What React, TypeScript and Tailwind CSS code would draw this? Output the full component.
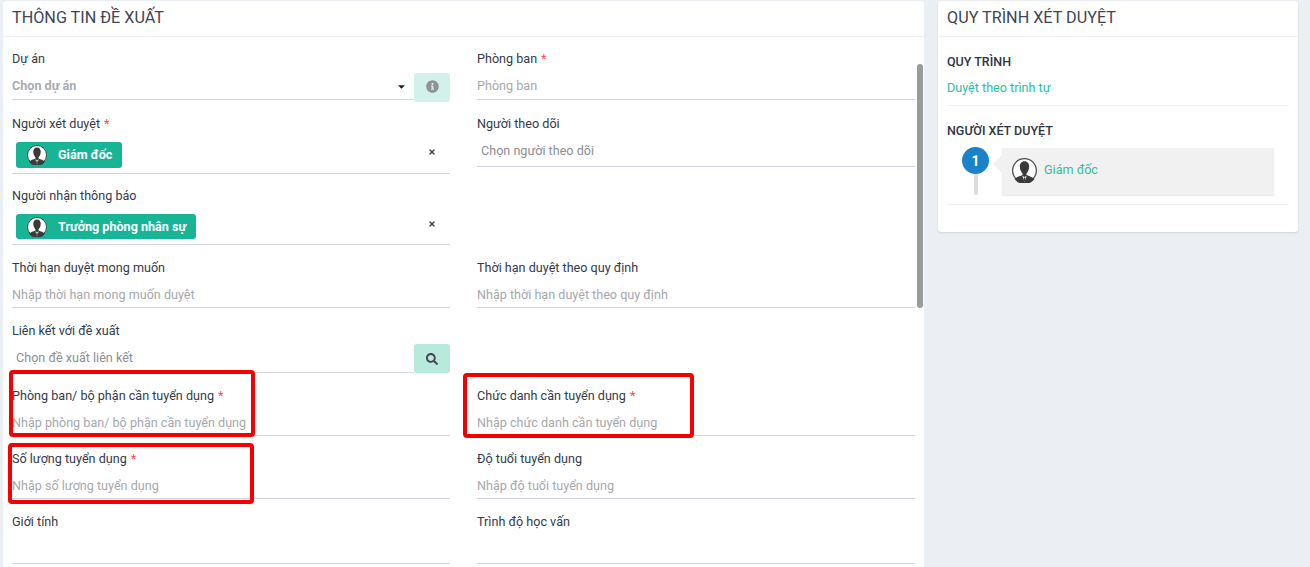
import type { ReactNode } from 'react';
import { FaCaretDown, FaInfoCircle, FaSearch, FaTimes } from 'react-icons/fa';

function Avatar({ className }: { className: string }) {
  return (
    <svg viewBox="0 0 40 40" className={className}>
      <circle cx="20" cy="20" r="19" fill="#fff" stroke="#4a4a4a" strokeWidth="2" />
      <path d="M20 5c-5 0-7.500 4-7.500 8.500 0 4.500 2.200 8.500 4.500 11.500v2c-4.500 2-10 3-13 6.500a19.500 19.500 0 0 0 32 0c-3-3.500-8.500-4.500-13-6.500v-2c2.300-3 4.500-7 4.500-11.500 0-4.500-2.500-8.500-7.500-8.500z" fill="#3a3a3a" />
      <path d="M16.500 28.500l3.500 10 3.500-10-3.500 2z" fill="#fff" />
      <path d="M19 31h2l.6 6h-3.200z" fill="#3a3a3a" />
    </svg>
  );
}

function Label({ text, required }: { text: string; required?: boolean }) {
  return (
    <div className="h-5 leading-5 text-[#333a4a]">
      {text}
      {required && <span className="ml-1 text-[#f4514b]">*</span>}
    </div>
  );
}

function Chip({ text, className }: { text: string; className: string }) {
  return (
    <div className={`flex items-center rounded-[3px] bg-[#17b595] pl-[11px] font-bold text-white ${className}`}>
      <Avatar className="h-5 w-5 shrink-0" />
      <span className="ml-[11px]">{text}</span>
    </div>
  );
}

function ChipField({ text, chipClass, height }: { text: string; chipClass: string; height: string }) {
  return (
    <div className={`flex items-start justify-between border-b border-[#d2d6e0] pl-1 pr-[14px] ${height}`}>
      <Chip text={text} className={chipClass} />
      <FaTimes className="mt-[14px] text-[8px] text-[#444]" />
    </div>
  );
}

function TextField({ text, height = 'h-[30px]', top = 'pt-[5px]' }: { text: string; height?: string; top?: string }) {
  return (
    <div className={`flex items-center border-b border-[#d2d6e0] text-[#a6a8ad] ${top} ${height}`}>
      {text}
    </div>
  );
}

function Field({ label, required, children }: { label: string; required?: boolean; children: ReactNode }) {
  return (
    <div>
      <Label text={label} required={required} />
      {children}
    </div>
  );
}

function Frame({ className }: { className: string }) {
  return <div className={`pointer-events-none absolute rounded-[4px] border-4 border-[#f40000] ${className}`} />;
}

export default function App() {
  return (
    <div className="flex h-screen items-start overflow-hidden bg-[#ebeef3] pl-[3px] pt-px font-['Roboto',sans-serif] text-[12.6px]">
      <div className="relative h-[600px] w-[921px] shrink-0 rounded-t-[3px] bg-white">
        <div className="h-9 border-b border-[#f0f1f4] pl-[9px] text-[16.2px] leading-[33px] text-[#3f4553]">
          THÔNG TIN ĐỀ XUẤT
        </div>

        <div className="grid grid-cols-2 gap-x-[27px] gap-y-[13px] pl-[9px] pr-[9px] pt-[12px]">
          <div className="mb-px">
            <Field label="Dự án">
              <div className="flex h-[31px] items-start">
                <div className="flex h-[31px] flex-1 items-center justify-between border-b border-[#d2d6e0] pr-[7px] pt-[4px] font-bold text-[#a9abb0]">
                  <span>Chọn dự án</span>
                  <FaCaretDown className="text-[11px] text-[#222]" />
                </div>
                <div className="mt-1 flex h-[29px] w-9 items-center justify-center rounded-[3px] bg-[#d2f1ea] pb-[3px]">
                  <FaInfoCircle className="text-[13px] text-[#8f9396]" />
                </div>
              </div>
            </Field>
          </div>
          <Field label="Phòng ban" required>
            <TextField text="Phòng ban" height="h-[31px]" top="pt-[4px]" />
          </Field>

          <Field label="Người xét duyệt" required>
            <ChipField text="Giám đốc" chipClass="mt-[8px] h-[26px] w-[106px]" height="h-[40px]" />
          </Field>
          <Field label="Người theo dõi">
            <div className="flex h-[33px] items-center border-b border-[#d2d6e0] pl-1 pt-[3px] text-[#8c8e94]">
              Chọn người theo dõi
            </div>
          </Field>

          <div className="-mt-px">
            <Field label="Người nhận thông báo">
              <ChipField text="Trưởng phòng nhân sự" chipClass="mt-2 h-[25px] w-[180px] pt-px" height="h-[39px]" />
            </Field>
          </div>
          <div />

          <Field label="Thời hạn duyệt mong muốn">
            <TextField text="Nhập thời hạn mong muốn duyệt" />
          </Field>
          <Field label="Thời hạn duyệt theo quy định">
            <TextField text="Nhập thời hạn duyệt theo quy định" />
          </Field>

          <Field label="Liên kết với đề xuất">
            <div className="flex h-8 items-start">
              <div className="flex h-8 flex-1 items-center border-b border-[#d2d6e0] pl-1 pt-[3px] text-[#8c8e94]">
                Chọn đề xuất liên kết
              </div>
              <div className="mt-[3px] flex h-[29px] w-9 items-center justify-center rounded-[3px] bg-[#b7eadd]">
                <FaSearch className="text-[12px] text-[#3c4650]" />
              </div>
            </div>
          </Field>
          <div />

          <Field label="Phòng ban/ bộ phận cần tuyển dụng" required>
            <TextField text="Nhập phòng ban/ bộ phận cần tuyển dụng" />
          </Field>
          <Field label="Chức danh cần tuyển dụng" required>
            <TextField text="Nhập chức danh cần tuyển dụng" />
          </Field>

          <Field label="Số lượng tuyển dụng" required>
            <TextField text="Nhập số lượng tuyển dụng" />
          </Field>
          <Field label="Độ tuổi tuyển dụng">
            <TextField text="Nhập độ tuổi tuyển dụng" />
          </Field>

          <Field label="Giới tính">
            <TextField text="" height="h-8" />
          </Field>
          <Field label="Trình độ học vấn">
            <TextField text="" height="h-8" />
          </Field>
        </div>

        <div className="absolute left-[914px] top-[63px] h-[244px] w-[6px] rounded-[3px] bg-[#9b9b9b]" />

        <Frame className="left-[6px] top-[369px] h-[67px] w-[246px]" />
        <Frame className="left-[5px] top-[442px] h-[61px] w-[246px]" />
        <Frame className="left-[460px] top-[372px] h-[65px] w-[231px]" />
      </div>

      <div className="ml-[14px] w-[360px] shrink-0 rounded-[3px] bg-white pb-[27px] shadow-[0_1px_2px_rgba(0,0,0,0.12)]">
        <div className="h-9 border-b border-[#f0f1f4] pl-[9px] text-[16.2px] leading-[33px] text-[#3f4553]">
          QUY TRÌNH XÉT DUYỆT
        </div>
        <div className="px-[9px]">
          <div className="border-b border-[#f0f1f4] pb-[7px] pt-[15px]">
            <div className="h-5 text-[12.5px] font-medium leading-5 text-[#2f3542]">QUY TRÌNH</div>
            <div className="mt-[6px] h-5 leading-5 text-[#1fc0a5]">Duyệt theo trình tự</div>
          </div>
          <div className="border-b border-[#f0f1f4] pb-[9px] pt-[15px]">
            <div className="h-5 text-[12.5px] font-medium leading-5 text-[#2f3542]">NGƯỜI XÉT DUYỆT</div>
            <div className="mt-[6px] flex items-start pl-[15px]">
              <div className="flex w-[27px] flex-col items-center">
                <div className="flex h-[27px] w-[27px] items-center justify-center rounded-full bg-[#1a82c8] text-sm font-bold text-white">
                  1
                </div>
                <div className="h-[21px] w-1 rounded-b-[2px] bg-[#dcdcdc]" />
              </div>
              <div className="relative ml-[13px] mt-px flex h-[47px] w-[272px] items-center bg-[#f1f1f1] pl-[10px] pb-[3px] shadow-[0_1px_1px_rgba(0,0,0,0.08)]">
                <div className="absolute -left-[9px] top-[7px] h-0 w-0 border-y-[9px] border-r-[9px] border-y-transparent border-r-[#f1f1f1]" />
                <Avatar className="h-[25px] w-[25px]" />
                <span className="ml-[7px] text-[#3cb89c]">Giám đốc</span>
              </div>
            </div>
          </div>
        </div>
      </div>
    </div>
  );
}
